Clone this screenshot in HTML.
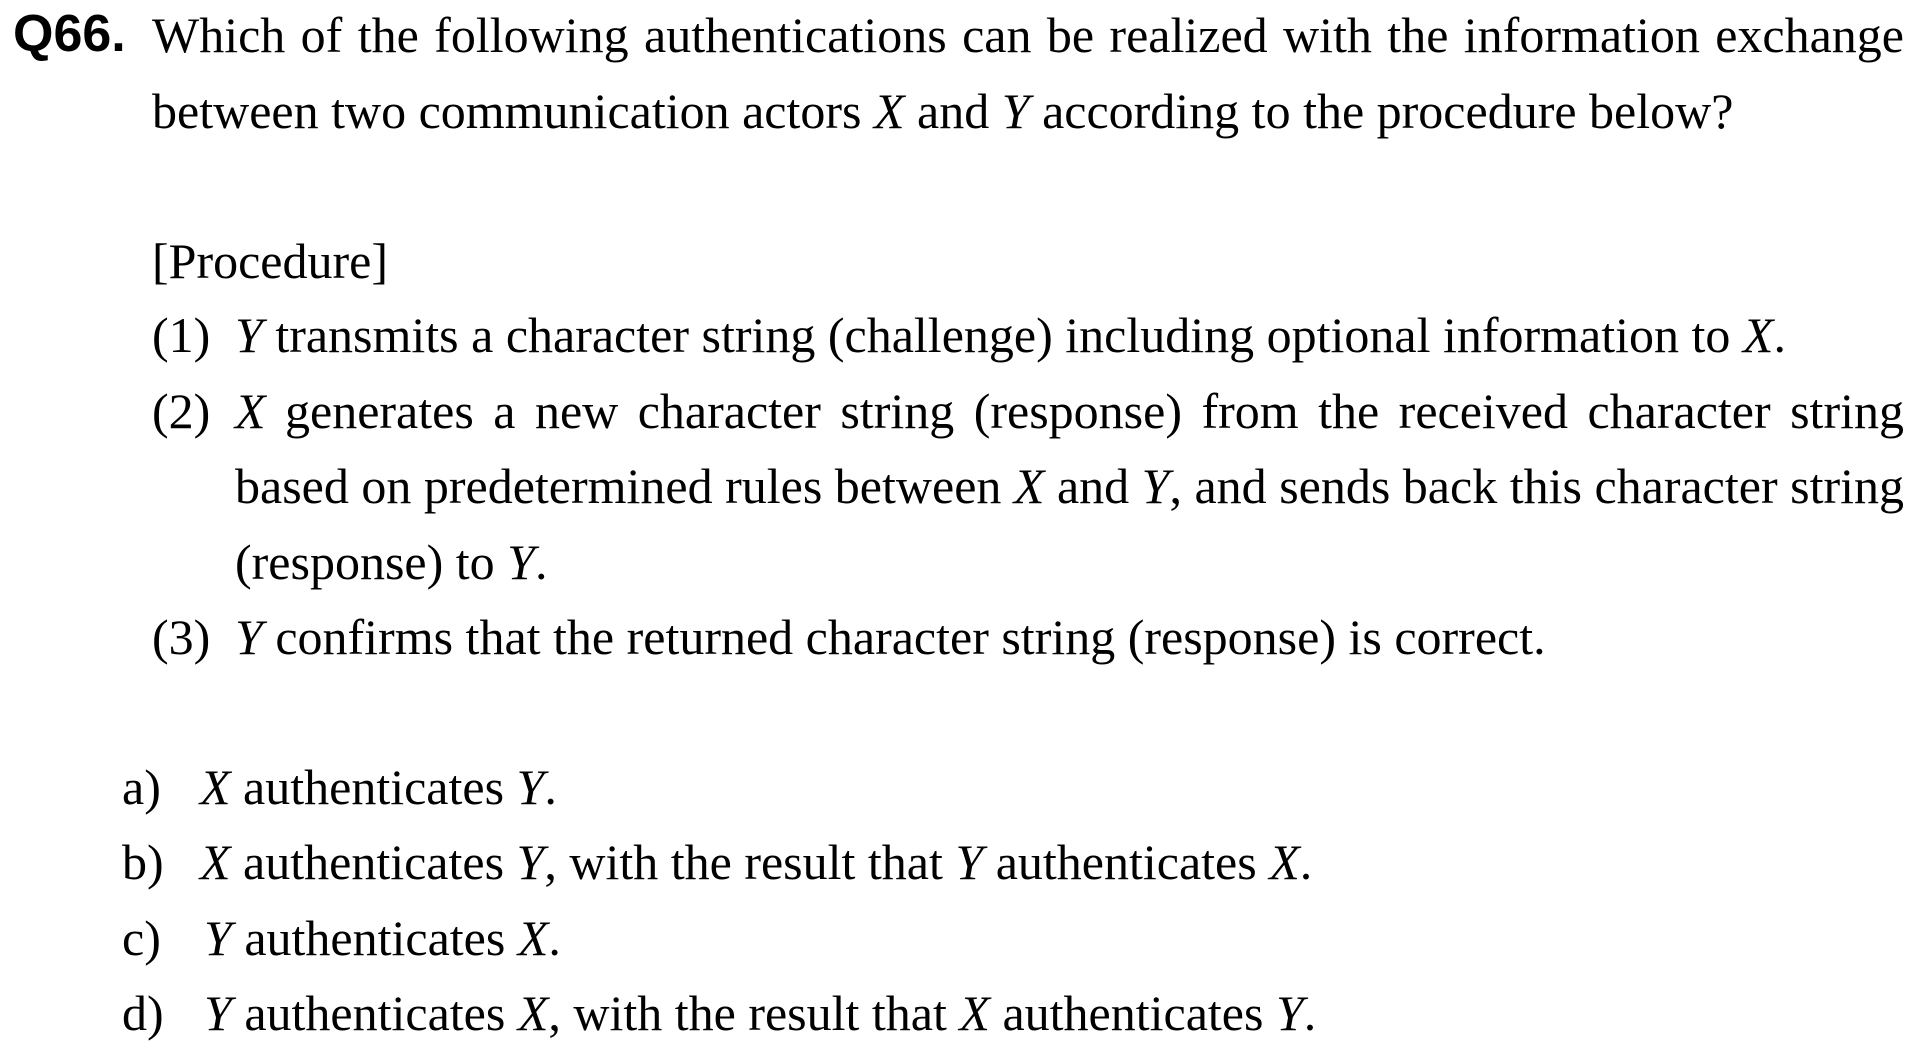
<!DOCTYPE html>
<html><head><meta charset="utf-8"><style>
body{margin:0;width:1920px;height:1053px;background:#fff;position:relative;overflow:hidden;font-family:"Liberation Serif",serif;font-size:50px;color:#000}
.l{position:absolute;line-height:75px;white-space:nowrap}
.j{text-align:justify;text-align-last:justify;white-space:normal}
i{font-style:italic}
.q{position:absolute;left:13px;top:-3px;line-height:75px;font-family:"Liberation Sans",sans-serif;font-weight:bold;font-size:52px}
</style></head><body>
<div class="q">Q66.</div>
<div class="l j" style="left:152px;top:-2px;width:1752px">Which of the following authentications can be realized with the information exchange</div>
<div class="l" style="left:152px;top:74px">between two communication actors <i>X</i> and <i>Y</i> according to the procedure below?</div>
<div class="l" style="left:152px;top:224px">[Procedure]</div>
<div class="l" style="left:152px;top:298px">(1)</div>
<div class="l" style="left:235px;top:298px"><i>Y</i> transmits a character string (challenge) including optional information to <i>X</i>.</div>
<div class="l" style="left:152px;top:374px">(2)</div>
<div class="l j" style="left:235px;top:374px;width:1669px"><i>X</i> generates a new character string (response) from the received character string</div>
<div class="l j" style="left:235px;top:449px;width:1669px">based on predetermined rules between <i>X</i> and <i>Y</i>, and sends back this character string</div>
<div class="l" style="left:235px;top:525px">(response) to <i>Y</i>.</div>
<div class="l" style="left:152px;top:600px">(3)</div>
<div class="l" style="left:235px;top:600px"><i>Y</i> confirms that the returned character string (response) is correct.</div>
<div class="l" style="left:122px;top:750px">a)</div>
<div class="l" style="left:200px;top:750px"><i>X</i> authenticates <i>Y</i>.</div>
<div class="l" style="left:122px;top:825px">b)</div>
<div class="l" style="left:200px;top:825px"><i>X</i> authenticates <i>Y</i>, with the result that <i>Y</i> authenticates <i>X</i>.</div>
<div class="l" style="left:122px;top:901px">c)</div>
<div class="l" style="left:204px;top:901px"><i>Y</i> authenticates <i>X</i>.</div>
<div class="l" style="left:122px;top:976px">d)</div>
<div class="l" style="left:204px;top:976px"><i>Y</i> authenticates <i>X</i>, with the result that <i>X</i> authenticates <i>Y</i>.</div>
</body></html>
